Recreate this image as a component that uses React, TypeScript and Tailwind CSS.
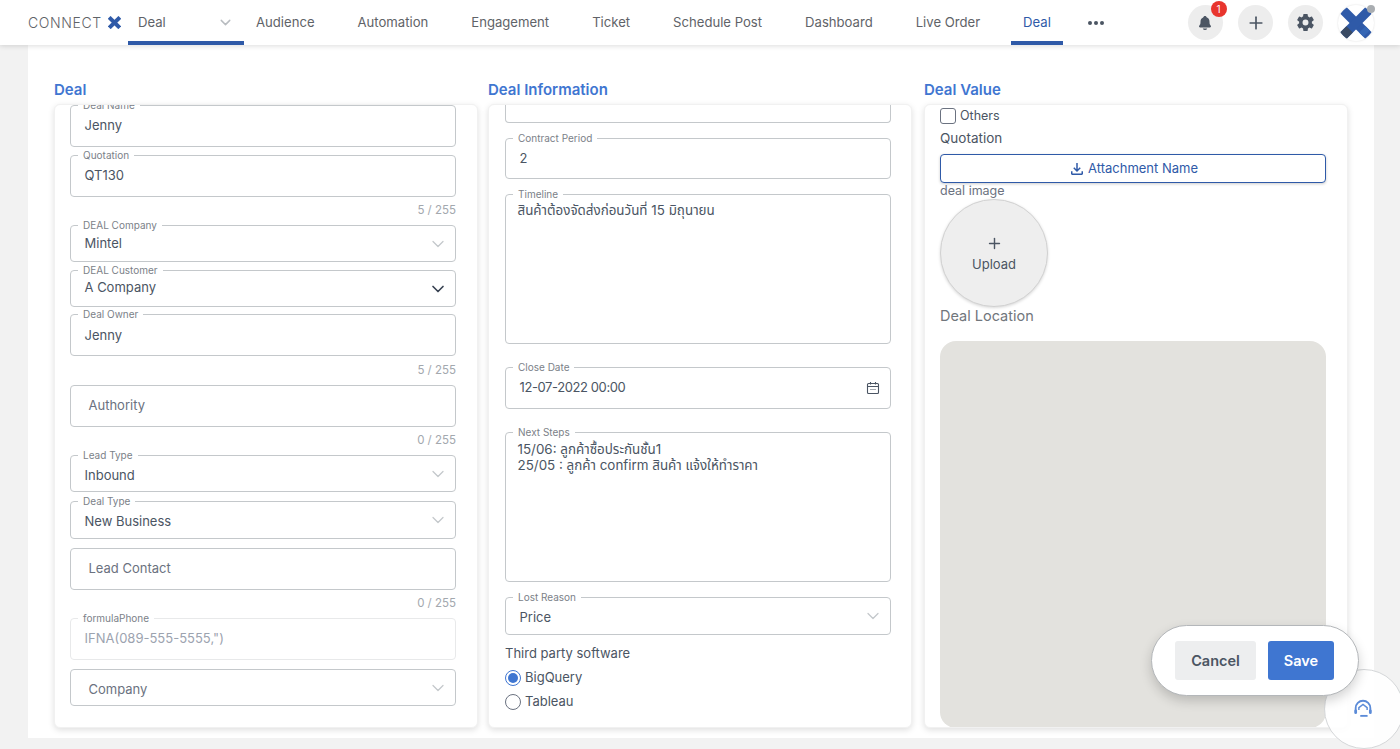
import React from 'react';
import { ChevronDown, Plus } from 'lucide-react';
import { IoNotifications, IoSettingsSharp } from 'react-icons/io5';
import { MdOutlineFileDownload } from 'react-icons/md';

const fontStack = { fontFamily: 'Inter, "Noto Sans", "Noto Sans Thai", "DejaVu Sans", sans-serif' };

const tabs = ['Audience', 'Automation', 'Engagement', 'Ticket', 'Schedule Post', 'Dashboard', 'Live Order'];

const LogoMark = () => (
  <svg viewBox="0 0 14 14" className="ml-[6px] h-[13px] w-[13px]">
    <rect x="-1" y="5" width="16" height="4.200" fill="#2f5aa8" transform="rotate(45 7 7)" />
    <rect x="-1" y="5" width="16" height="4.200" fill="#2f5aa8" transform="rotate(-45 7 7)" />
  </svg>
);

const AvatarMark = () => (
  <svg viewBox="0 0 36 36" className="h-[36px] w-[36px]">
    <rect x="0" y="13.500" width="36" height="9" fill="#2f5aa8" transform="rotate(45 18 18)" />
    <rect x="0" y="13.500" width="36" height="9" fill="#2f5aa8" transform="rotate(-45 18 18)" />
    <rect x="0" y="13.500" width="9" height="9" fill="#3a4a63" transform="rotate(-45 18 18)" />
    <rect x="27" y="13.500" width="6" height="9" fill="#3566b4" transform="rotate(45 18 18)" />
  </svg>
);

const CalendarIcon = () => (
  <svg viewBox="0 0 14 14" className="mr-[-4px] h-[14px] w-[14px]" fill="none" stroke="#4b5563" strokeWidth="1.100">
    <rect x="1.500" y="2.500" width="11" height="10" rx="1" />
    <path d="M1.500 5.500h11M4.500 1v2.500M9.500 1v2.500" />
    <path d="M4.500 8.500h1M6.500 8.500h1M8.500 8.500h1" strokeWidth="1" />
  </svg>
);

const HeadsetIcon = () => (
  <svg viewBox="0 0 24 24" className="h-[22px] w-[22px]" fill="none" stroke="#5b8bd8" strokeWidth="2">
    <path d="M4 15v-4a8 8 0 0 1 16 0v4" />
    <path d="M7.500 13v-2.500L12 7l4.500 3.500V13" strokeWidth="1.600" />
    <rect x="2.500" y="12.500" width="3" height="5" rx="1.500" fill="#5b8bd8" stroke="none" />
    <rect x="18.500" y="12.500" width="3" height="5" rx="1.500" fill="#5b8bd8" stroke="none" />
    <path d="M9 19.500h8" />
  </svg>
);

type FieldProps = {
  label?: string;
  value?: string;
  placeholder?: string;
  select?: boolean;
  dark?: boolean;
  disabled?: boolean;
  multiline?: boolean;
  calendar?: boolean;
  valueClass?: string;
  className: string;
};

const Field = ({ label, value, placeholder, select, dark, disabled, multiline, calendar, valueClass, className }: FieldProps) => (
  <div
    className={`relative flex w-[385.500px] rounded-[4px] border-[1.5px] bg-white ${
      multiline ? 'items-start px-[11.500px] pt-[5px] text-[13.400px]' : 'items-center px-[13.500px] text-[13px]'
    } ${disabled ? 'border-[#e8e9ea] text-[#9ca3af]' : 'border-[#c4c8cb] text-[#4b5563]'} ${className}`}
  >
    {label && (
      <span className="absolute left-[7px] top-[-8px] whitespace-nowrap bg-white px-[5px] text-[10px] leading-[14px] text-[#7b8188]">
        {label}
      </span>
    )}
    <div className={`flex-1 whitespace-pre-line ${placeholder ? 'pl-[4px] text-[#6b7280]' : ''} ${valueClass ?? ''}`}>
      {value || placeholder}
    </div>
    {select && (
      <ChevronDown
        size={20}
        strokeWidth={dark ? 2 : 1.500}
        className={dark ? 'mr-[-7px] text-[#374151]' : 'mr-[-7px] text-[#c4c8cb]'}
      />
    )}
    {calendar && <CalendarIcon />}
  </div>
);

const Counter = ({ text, className }: { text: string; className: string }) => (
  <div className={`flex w-[386px] items-center justify-end text-[11.500px] text-[#a3a8ae] ${className}`}>{text}</div>
);

const Card = ({ title, className, children }: { title: string; className: string; children: React.ReactNode }) => (
  <section className={`w-[424px] shrink-0 ${className}`}>
    <h2 className="h-[24px] text-[15px] leading-[20px] font-semibold text-[#3f76d1]">{title}</h2>
    <div className="h-[624px] overflow-hidden rounded-[6px] border border-[#f1f1f1] bg-white shadow-[0_2px_6px_rgba(0,0,0,0.13)]">
      {children}
    </div>
  </section>
);

export default function App() {
  return (
    <div className="relative h-[749px] w-[1400px] overflow-hidden bg-[#f2f2f2]" style={fontStack}>
      <header className="relative z-10 flex h-[45px] items-center bg-white shadow-[0_1px_5px_rgba(0,0,0,0.14)]">
        <div className="flex w-[128px] items-center pl-[28px]">
          <span className="text-[14px] font-light tracking-[0.6px] text-[#5f6368]">CONNECT</span>
          <LogoMark />
        </div>
        <div className="flex h-full w-[116px] items-center justify-between border-b-[4px] border-[#2f5aa8] pl-[10px] pr-[10px] pt-[4px] text-[13.120px] text-[#5f6368]">
          <span>Deal</span>
          <ChevronDown size={17} className="text-[#b8bcc0]" />
        </div>
        <nav className="flex h-full items-center gap-[19px] text-[13.120px] text-[#5f6368]">
          {tabs.map((tab) => (
            <span key={tab} className="px-3">
              {tab}
            </span>
          ))}
          <span className="flex h-full items-center border-b-[4px] border-[#2f5aa8] px-3 pt-[4px] text-[#2f5aa8]">Deal</span>
          <span className="ml-[6px] flex gap-[2px]">
            <i className="h-[4px] w-[4px] rounded-full bg-[#4b5563]" />
            <i className="h-[4px] w-[4px] rounded-full bg-[#4b5563]" />
            <i className="h-[4px] w-[4px] rounded-full bg-[#4b5563]" />
          </span>
        </nav>
        <div className="ml-auto flex items-center gap-[15px] pr-[26px]">
          <button className="relative mr-[0.500px] flex h-[35px] w-[35px] items-center justify-center rounded-full bg-[#ededed]">
            <IoNotifications size={16} className="text-[#4b5563]" />
            <span className="absolute right-[-4px] top-[-4px] flex h-[16px] w-[16px] items-center justify-center rounded-full bg-[#e8352e] text-[10px] text-white">
              1
            </span>
          </button>
          <button className="flex h-[35px] w-[35px] items-center justify-center rounded-full bg-[#ededed]">
            <Plus size={20} className="text-[#4b5563]" />
          </button>
          <button className="flex h-[35px] w-[35px] items-center justify-center rounded-full bg-[#ededed]">
            <IoSettingsSharp size={19} className="text-[#4b5563]" />
          </button>
          <div className="relative h-[36px] w-[36px] overflow-visible">
            <div className="h-[36px] w-[36px] overflow-hidden rounded-full bg-white shadow-[0_0_2px_rgba(0,0,0,0.15)]">
              <AvatarMark />
            </div>
            <span className="absolute right-[-1px] top-0 h-[8px] w-[8px] rounded-full bg-[#a9adb1]" />
          </div>
        </div>
      </header>

      <main className="ml-[28px] flex h-[693px] w-[1346px] bg-white px-[26px] pt-[35px]">
        <Card title="Deal" className="mr-[10px]">
          <div className="pl-[15px]">
            <Field label="Deal Name" value="Jenny" className="h-[42px]" />
            <Field label="Quotation" value="QT130" className="mt-[8px] h-[42px]" />
            <Counter text="5 / 255" className="h-[28px]" />
            <Field label="DEAL Company" value="Mintel" select className="h-[37px]" />
            <Field label="DEAL Customer" value="A Company" select dark valueClass="mt-[-2px]" className="mt-[8px] h-[37px]" />
            <Field label="Deal Owner" value="Jenny" valueClass="pt-[2px]" className="mt-[7px] h-[42px]" />
            <Counter text="5 / 255" className="h-[29px]" />
            <Field placeholder="Authority" className="h-[42px]" />
            <Counter text="0 / 255" className="h-[28px]" />
            <Field label="Lead Type" value="Inbound" select valueClass="pt-[4px]" className="h-[37px]" />
            <Field label="Deal Type" value="New Business" select valueClass="pt-[4px]" className="mt-[9px] h-[38px]" />
            <Field placeholder="Lead Contact" className="mt-[9px] h-[42px]" />
            <Counter text="0 / 255" className="h-[28px]" />
            <Field label="formulaPhone" value={'IFNA(089-555-5555,")'} disabled className="h-[42px]" />
            <Field placeholder="Company" select valueClass="pt-[4px]" className="mt-[9px] h-[37px]" />
          </div>
        </Card>

        <Card title="Deal Information" className="mr-[12px]">
          <div className="pl-[16px]">
            <div className="h-[18px] w-[385.500px] rounded-b-[4px] border-[1.5px] border-t-0 border-[#c4c8cb]" />
            <Field label="Contract Period" value="2" className="mt-[15px] h-[41px]" />
            <Field label="Timeline" value="สินค้าต้องจัดส่งก่อนวันที่ 15 มิถุนายน" multiline className="mt-[15px] h-[150px]" />
            <Field
              label="Close Date"
              value="12-07-2022 00:00"
              calendar
              valueClass="tracking-[-0.4px]"
              className="mt-[23px] h-[42px]"
            />
            <Field
              label="Next Steps"
              value={'15/06: ลูกค้าซื้อประกันชั้น1\n25/05 : ลูกค้า confirm สินค้า แจ้งให้ทำราคา'}
              multiline
              valueClass="pt-[3px]"
              className="mt-[23px] h-[150px] leading-[16px]"
            />
            <Field label="Lost Reason" value="Price" select valueClass="pt-[4px]" className="mt-[15px] h-[38px]" />
            <div className="mt-[8px] text-[13px] leading-[20px] text-[#4b5563]">Third party software</div>
            <div className="mt-[3px] flex h-[24px] items-center gap-[4px] text-[13px] text-[#4b5563]">
              <span className="flex h-[16px] w-[16px] items-center justify-center rounded-full border border-[#3f76d1]">
                <i className="h-[10px] w-[10px] rounded-full bg-[#3f76d1]" />
              </span>
              BigQuery
            </div>
            <div className="flex h-[24px] items-center gap-[4px] text-[13px] text-[#4b5563]">
              <span className="h-[16px] w-[16px] rounded-full border border-[#6b7280]" />
              Tableau
            </div>
          </div>
        </Card>

        <Card title="Deal Value" className="">
          <div className="px-[15px] pt-[3px]">
            <div className="flex h-[16px] items-center gap-[4px] text-[12.500px] text-[#4b5563]">
              <span className="h-[16px] w-[16px] rounded-[3px] border border-[#6b7280]" />
              Others
            </div>
            <div className="mt-[3px] h-[23px] text-[13.500px] leading-[23px] text-[#4b5563]">Quotation</div>
            <button className="mt-[4px] flex h-[29px] w-[386px] items-center justify-center gap-[2px] rounded-[4px] border border-[#2f5aa8] bg-white text-[13px] text-[#2f5aa8] shadow-[0_1px_3px_rgba(0,0,0,0.2)]">
              <MdOutlineFileDownload size={18} />
              Attachment Name
            </button>
            <div className="h-[16px] text-[12.500px] leading-[15px] text-[#6b7280]">deal image</div>
            <button className="flex h-[108px] w-[108px] flex-col items-center justify-center rounded-full border border-[#d1d1d1] bg-[#eeeeee] pt-[3px] text-[13px] text-[#4b5563] shadow-[0_1px_3px_rgba(0,0,0,0.15)]">
              <Plus size={17} />
              <span className="mt-[3px]">Upload</span>
            </button>
            <div className="h-[34px] text-[14.500px] leading-[18px] text-[#71767c]">Deal Location</div>
            <div className="h-[387px] w-[386px] rounded-[16px] bg-[#e3e2de]" />
          </div>
        </Card>
      </main>

      {/* floating actions */}
      <div className="absolute left-[1151px] top-[625px] z-20 flex h-[71px] w-[208px] items-center gap-[12px] rounded-full border border-[#b4b7ba] bg-white pl-[23px] shadow-[0_5px_12px_rgba(0,0,0,0.18)]">
        <button className="h-[39px] w-[81px] rounded-[3px] bg-[#edeeef] text-[14.500px] font-semibold text-[#4b5563]">Cancel</button>
        <button className="h-[39px] w-[66px] rounded-[3px] bg-[#3f76d1] text-[14.500px] font-semibold text-white">Save</button>
      </div>
      <div className="absolute left-[1324px] top-[669px] z-10 flex h-[80px] w-[80px] items-center justify-center rounded-full border border-[#d5d7d9] bg-white/90 pr-[3px]">
        <HeadsetIcon />
      </div>
    </div>
  );
}
